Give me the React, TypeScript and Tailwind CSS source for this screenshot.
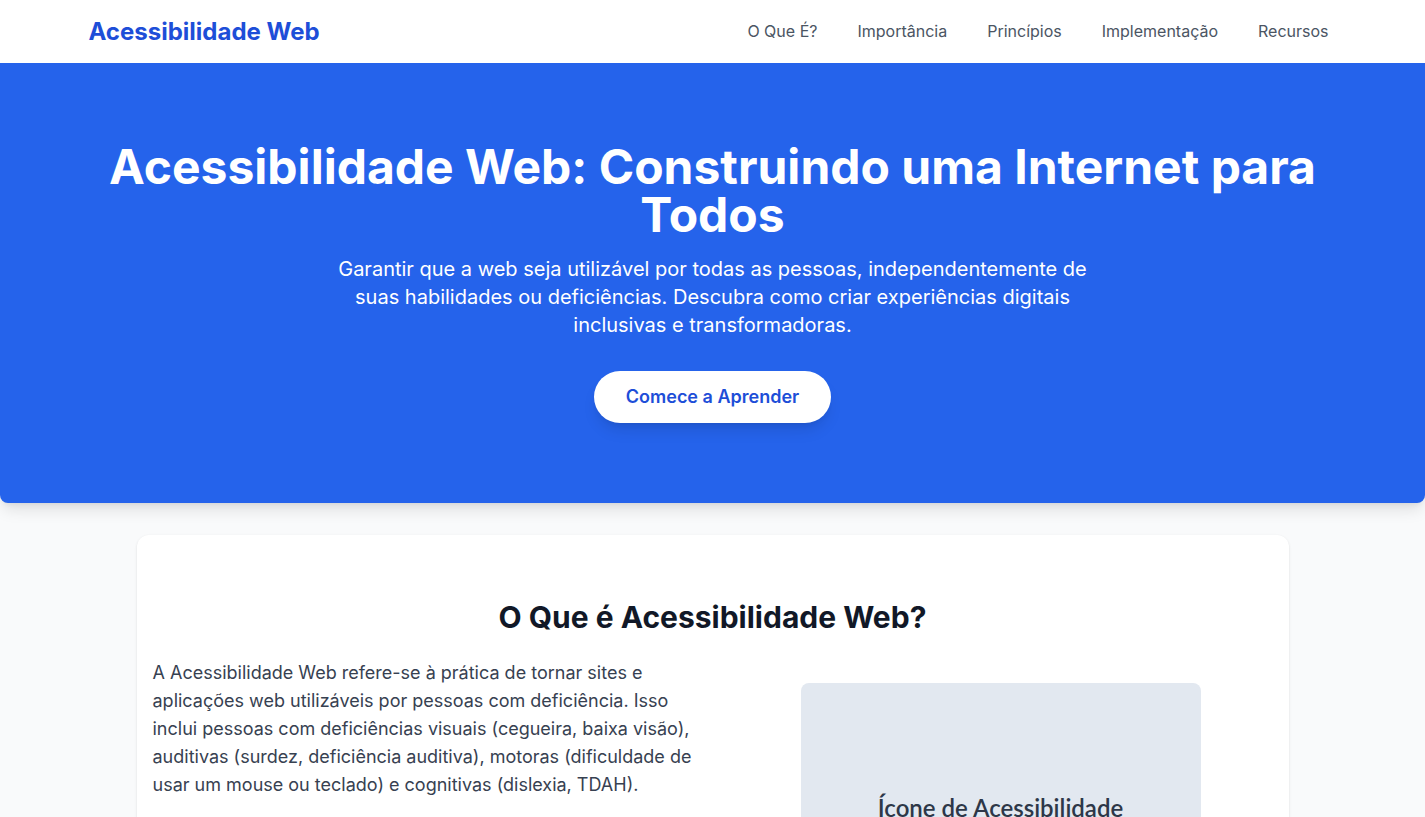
import React from "react";

export default function App() {
  const links = ["O Que É?", "Importância", "Princípios", "Implementação", "Recursos"];
  return (
    <div className="min-h-screen bg-[#f9fafb] font-['Inter',sans-serif]">
      <header className="bg-white shadow-sm">
        <div className="max-w-7xl mx-auto px-4 h-[63px] flex items-center justify-between">
          <div className="text-2xl font-bold text-[#1d4ed8]">Acessibilidade Web</div>
          <nav className="flex gap-6 -mt-px">
            {links.map((l) => (
              <a key={l} href="#" className="px-2 text-base text-[#4b5563]">
                {l}
              </a>
            ))}
          </nav>
        </div>
      </header>

      <section className="bg-[#2563eb] text-white rounded-b-lg shadow-lg">
        <div className="max-w-7xl mx-auto px-4 pt-20 pb-20 text-center">
          <h1 className="text-5xl font-bold leading-[48px] mb-4">
            Acessibilidade Web: Construindo uma Internet para Todos
          </h1>
          <p className="text-xl max-w-3xl mx-auto mb-8">
            Garantir que a web seja utilizável por todas as pessoas, independentemente de suas habilidades ou deficiências. Descubra como criar experiências digitais inclusivas e transformadoras.
          </p>
          <button className="bg-white text-[#1d4ed8] text-lg font-semibold px-8 py-3 rounded-full shadow-lg">
            Comece a Aprender
          </button>
        </div>
      </section>

      <main className="max-w-6xl mx-auto mt-8">
        <section className="bg-white rounded-xl shadow-sm px-4 py-16">
          <h2 className="text-3xl font-bold text-[#111827] text-center mb-6">
            O Que é Acessibilidade Web?
          </h2>
          <div className="grid grid-cols-2 gap-8">
            <div className="text-lg text-[#374151]">
              <p className="mb-4">
                A Acessibilidade Web refere-se à prática de tornar sites e aplicações web utilizáveis por pessoas com deficiência. Isso inclui pessoas com deficiências visuais (cegueira, baixa visão), auditivas (surdez, deficiência auditiva), motoras (dificuldade de usar um mouse ou teclado) e cognitivas (dislexia, TDAH).
              </p>
              <p className="mb-4">
                Mas a acessibilidade também beneficia pessoas sem deficiência, como idosos, usuários de dispositivos móveis e pessoas com conexões lentas.
              </p>
            </div>
            <div className="pt-6">
              <div className="w-[400px] h-[300px] mx-auto bg-[#e2e8f0] rounded-lg pt-[109px] text-center">
                <span className="font-['Lato',sans-serif] text-2xl font-semibold text-[#2d3748]">Ícone de Acessibilidade</span>
              </div>
            </div>
          </div>
        </section>
      </main>
    </div>
  );
}
